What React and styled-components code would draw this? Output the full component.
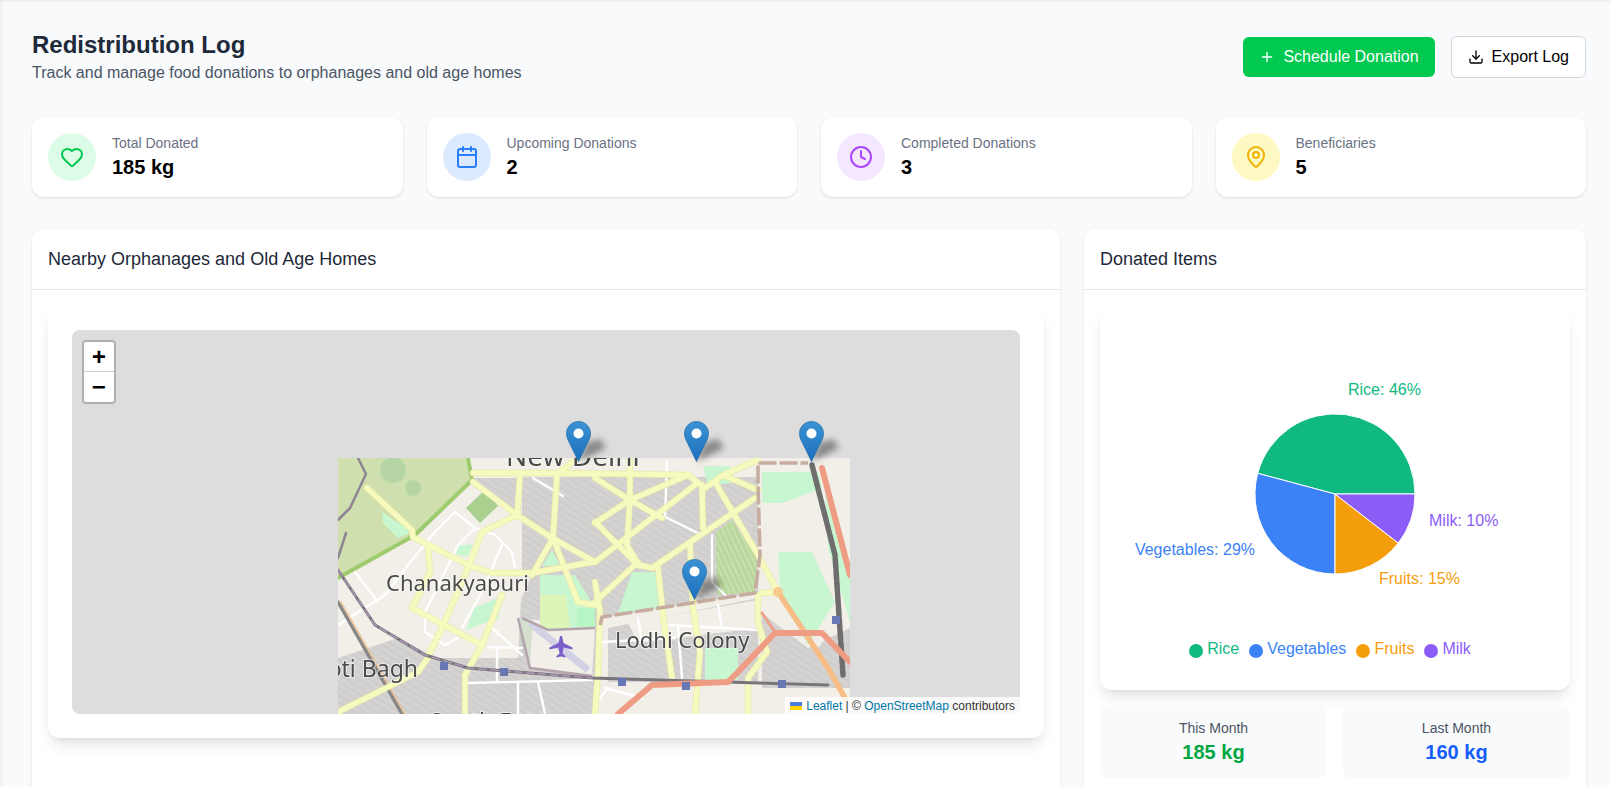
import React from 'react';
import styled, { createGlobalStyle } from 'styled-components';
import { Plus, Download, Heart, Calendar, Clock, MapPin } from 'lucide-react';

const GlobalStyle = createGlobalStyle`
  html,
  body {
    margin: 0;
    height: 100%;
    overflow: hidden;
    background: #f9fafb;
    font-family: 'Liberation Sans', Arial, sans-serif;
  }
  * {
    box-sizing: border-box;
  }
`;

const Page = styled.div`
  height: 787px;
  overflow: hidden;
  padding: 29px 24px 0 32px;
  background: #f9fafb;
  box-shadow: inset 0 3px 3px -2px rgba(0, 0, 0, 0.08), inset 3px 0 3px -2px rgba(0, 0, 0, 0.06);
`;

const Header = styled.header`
  display: flex;
  justify-content: space-between;
  align-items: center;
  margin-bottom: 32px;
`;

const Title = styled.h1`
  margin: 0;
  font-size: 24px;
  line-height: 32px;
  font-weight: 700;
  color: #1e2939;
`;

const Subtitle = styled.p`
  margin: 0;
  font-size: 16px;
  line-height: 24px;
  color: #4a5565;
`;

const Actions = styled.div`
  display: flex;
  align-items: center;
  gap: 16px;
`;

const Button = styled.button`
  display: flex;
  align-items: center;
  gap: 8px;
  height: ${(p) => (p.$primary ? '40px' : '42px')};
  padding: 0 16px;
  border: ${(p) => (p.$primary ? 'none' : '1px solid #d1d5dc')};
  border-radius: 6px;
  background: ${(p) => (p.$primary ? '#00c951' : '#fff')};
  color: ${(p) => (p.$primary ? '#fff' : '#000')};
  font-family: inherit;
  font-size: 16px;
`;

const StatGrid = styled.section`
  display: grid;
  grid-template-columns: repeat(4, 1fr);
  gap: 24px;
  margin-bottom: 32px;
`;

const StatCard = styled.div`
  display: flex;
  align-items: center;
  gap: 16px;
  padding: 16px;
  background: #fff;
  border-radius: 12px;
  box-shadow: 0 1px 3px rgba(0, 0, 0, 0.1), 0 1px 2px -1px rgba(0, 0, 0, 0.1);
`;

const IconCircle = styled.div`
  display: flex;
  align-items: center;
  justify-content: center;
  width: 48px;
  height: 48px;
  border-radius: 50%;
  background: ${(p) => p.$bg};
  color: ${(p) => p.$color};
`;

const StatLabel = styled.div`
  font-size: 14px;
  line-height: 20px;
  color: #6a7282;
`;

const StatValue = styled.div`
  font-size: 20px;
  line-height: 28px;
  font-weight: 700;
  color: #000;
`;

const MainGrid = styled.section`
  display: grid;
  grid-template-columns: repeat(3, 1fr);
  gap: 24px;
`;

const Card = styled.div`
  grid-column: span ${(p) => p.$span || 1};
  background: #fff;
  border-radius: 12px 12px 0 0;
  box-shadow: 0 1px 3px rgba(0, 0, 0, 0.1), 0 1px 2px -1px rgba(0, 0, 0, 0.1);
`;

const CardHeader = styled.div`
  height: 61px;
  padding: 16px;
  border-bottom: 1px solid #e5e7eb;
  font-size: 18px;
  line-height: 28px;
  color: #1e2939;
`;

const CardBody = styled.div`
  padding: 16px;
`;

const Panel = styled.div`
  height: ${(p) => (p.$map ? '432px' : '384px')};
  padding: 24px;
  margin-bottom: ${(p) => (p.$map ? '96px' : '16px')};
  background: #fff;
  border-radius: 12px;
  box-shadow: 0 10px 15px -3px rgba(0, 0, 0, 0.1), 0 4px 6px -4px rgba(0, 0, 0, 0.1);
`;

const MapBox = styled.div`
  position: relative;
  height: 384px;
  overflow: hidden;
  border-radius: 8px;
  background: #ddd;
`;

const Tile = styled.svg`
  position: absolute;
  left: 266px;
  top: 128px;
  width: 512px;
  height: 256px;
`;

const Zoom = styled.div`
  position: absolute;
  left: 10px;
  top: 10px;
  width: 34px;
  overflow: hidden;
  border: 2px solid rgba(0, 0, 0, 0.2);
  border-radius: 4px;
  background-clip: padding-box;
`;

const ZoomButton = styled.div`
  display: flex;
  align-items: center;
  justify-content: center;
  height: 30px;
  padding-top: 3px;
  background: #fff;
  color: #000;
  font-family: 'Liberation Mono', monospace;
  font-size: 24px;
  font-weight: 700;
  border-bottom: ${(p) => (p.$first ? '1px solid #ccc' : 'none')};
`;

const PinWrap = styled.svg`
  position: absolute;
  left: ${(p) => p.$x - 12.5}px;
  top: ${(p) => p.$y - 41}px;
  width: 41px;
  height: 41px;
  overflow: visible;
`;

const Attribution = styled.div`
  position: absolute;
  right: 0;
  bottom: 0;
  display: flex;
  align-items: center;
  height: 17px;
  padding: 0 5px;
  background: rgba(255, 255, 255, 0.8);
  color: #333;
  font-size: 12px;
  white-space: pre;
`;

const AttrLink = styled.span`
  color: #0078a8;
`;

const Flag = styled.svg`
  width: 12px;
  height: 8px;
  margin-right: 4px;
`;

const ChartSvg = styled.svg`
  display: block;
  width: 422px;
  height: 300px;
`;

const Legend = styled.ul`
  display: flex;
  justify-content: center;
  margin: 7px 0 0;
  padding: 0;
  list-style: none;
`;

const LegendItem = styled.li`
  display: flex;
  align-items: center;
  gap: 4px;
  margin-right: 10px;
  font-size: 16px;
  line-height: 24px;
  color: ${(p) => p.$color};
`;

const Dot = styled.span`
  width: 14px;
  height: 14px;
  margin-top: 3px;
  border-radius: 50%;
  background: ${(p) => p.$color};
`;

const MonthGrid = styled.div`
  display: grid;
  grid-template-columns: 1fr 1fr;
  gap: 16px;
`;

const MonthBox = styled.div`
  padding: 12px;
  border-radius: 8px;
  background: #f9fafb;
  text-align: center;
`;

const MonthLabel = styled.div`
  font-size: 14px;
  line-height: 20px;
  color: #4a5565;
`;

const MonthValue = styled.div`
  font-size: 20px;
  line-height: 28px;
  font-weight: 700;
  color: ${(p) => p.$color};
`;

const stats = [
  { label: 'Total Donated', value: '185 kg', Icon: Heart, bg: '#dcfce7', color: '#00c951' },
  { label: 'Upcoming Donations', value: '2', Icon: Calendar, bg: '#dbeafe', color: '#2b7fff' },
  { label: 'Completed Donations', value: '3', Icon: Clock, bg: '#f3e8ff', color: '#ad46ff' },
  { label: 'Beneficiaries', value: '5', Icon: MapPin, bg: '#fef9c2', color: '#f0b100' },
];

const slices = [
  { name: 'Rice', color: '#10b981', d: 'M211 164L291 164A80 80 0 0 0 133.7 143.3Z' },
  { name: 'Vegetables', color: '#3b82f6', d: 'M211 164L133.7 143.3A80 80 0 0 0 211 244Z' },
  { name: 'Fruits', color: '#f59e0b', d: 'M211 164L211 244A80 80 0 0 0 274.3 213Z' },
  { name: 'Milk', color: '#8b5cf6', d: 'M211 164L274.3 213A80 80 0 0 0 291 164Z' },
];

const sliceLabels = [
  { text: 'Rice: 46%', x: 224, y: 65, anchor: 'start', color: '#10b981' },
  { text: 'Vegetables: 29%', x: 131, y: 225, anchor: 'end', color: '#3b82f6' },
  { text: 'Fruits: 15%', x: 255, y: 254, anchor: 'start', color: '#f59e0b' },
  { text: 'Milk: 10%', x: 305, y: 196, anchor: 'start', color: '#8b5cf6' },
];

const pins = [
  { x: 506.5, y: 132 },
  { x: 624.5, y: 132 },
  { x: 739, y: 132 },
  { x: 622.5, y: 269.5 },
];

// map tile, traced in tile coordinates (512x256)
const blocks = [
  '184,19 420,19 420,135 262,160 257,256 0,256 0,200 60,180 100,200 180,200 184,120',
  '424,47 440,47 440,92 424,92',
  '424,155 470,190 512,170 512,230 424,230',
  '270,170 420,140 420,224 270,224',
  '130,20 184,20 180,55 150,40',
];

const beige = [
  '135,24 179,57 144,74 130,108 190,117 194,117 170,170 130,200 80,190 40,150 0,130 0,120 77,77',
  '290,165 420,142 420,170 300,185',
  '424,14 512,14 512,150 480,190 424,150',
  '180,160 257,168 254,218 192,210',
];

const mint = [
  '424,14 480,14 484,30 445,45 424,45',
  '440,94 474,94 497,144 470,187 457,164 442,130',
  '487,27 512,117 512,164 490,90',
  '294,114 320,114 320,150 280,155',
  '367,190 400,190 400,222 367,222',
  '202,117 237,117 254,145 257,170 210,172 202,150',
  '44,54 74,74 60,80 45,65',
  '204,108 214,92 222,108',
  '136,150 164,138 160,160 128,172',
  '120,88 135,86 130,98 118,97',
  '365,8 392,8 395,25 370,28',
];

const yellow = [
  '29,30 74,72 75,79 130,107 154,115 194,115 255,104',
  '135,15 184,15 220,15 350,17',
  '135,24 179,57 214,80 257,104',
  '182,19 179,57',
  '219,17 215,80',
  '179,57 144,74 130,110 104,170 89,200',
  '215,80 194,117',
  '215,80 240,144 257,147',
  '90,90 92,114 74,150 144,187',
  '164,137 144,187 127,217 127,256',
  '0,254 80,214 90,200',
  '257,65 292,42 350,17',
  '292,0 292,42 289,87 299,104',
  '257,20 292,42 324,60',
  '257,104 357,27',
  '257,64 300,107',
  '300,107 314,110 417,40',
  '364,27 365,70',
  '377,24 420,97 440,134',
  '257,144 300,104',
  '320,110 325,157 334,220',
  '352,87 355,150 362,194 357,256',
  '420,137 420,164 429,194 410,220 410,256',
  '257,124 262,154 260,214 257,256',
  '440,134 424,135',
  '350,17 367,30 385,17 415,30 420,32',
  '385,17 420,2',
  '240,0 220,15',
];

const white = [
  '117,54 137,70 157,77 174,94 177,110',
  '117,54 97,74 70,107 47,137 0,167',
  '137,70 120,87 104,120 87,154 87,174 107,187 120,180',
  '164,87 144,134 124,170',
  '17,114 40,144',
  '154,170 184,197',
  '150,189 184,190',
  '159,190 159,224',
  '130,225 254,222',
  '180,224 180,256',
  '200,224 207,256',
  '329,4 327,59 360,75',
  '374,77 374,124 387,137',
  '380,147 384,170',
  '300,160 304,184',
  '330,167 420,172',
  '264,184 337,180',
  '340,167 344,220',
  '270,230 257,247',
  '267,230 304,240',
  '195,20 225,38',
];

const stations = [
  [106, 208],
  [166, 214],
  [284, 224],
  [348, 228],
  [444, 226],
  [498, 162],
];

const MapTile = () => (
  <Tile viewBox="0 0 512 256">
    <defs>
      <pattern id="houses" width="6" height="6" patternUnits="userSpaceOnUse" patternTransform="rotate(32)">
        <rect width="6" height="6" fill="#d5d3d1" />
        <path d="M0 3H6" stroke="#c9c7c5" strokeWidth="1" />
      </pattern>
      <pattern id="stripes" width="5" height="5" patternUnits="userSpaceOnUse" patternTransform="rotate(65)">
        <rect width="5" height="5" fill="#b9d79c" />
        <path d="M0 2H5" stroke="#d3e6b8" strokeWidth="1.2" />
      </pattern>
    </defs>
    <g style={{ filter: 'blur(0.7px)' }}>
      <rect width="512" height="256" fill="#f2efe9" />
      {blocks.map((p) => (
        <polygon key={p} points={p} fill="url(#houses)" />
      ))}
      {beige.map((p) => (
        <polygon key={p} points={p} fill="#f2efe9" />
      ))}
      <polygon points="0,0 130,0 134,22 77,77 0,120" fill="#cfe0ae" />
      <polygon points="128,50 147,32 160,48 142,65" fill="#a9d08e" />
      <circle cx="55" cy="12" r="13" fill="#b5d6a4" />
      <circle cx="75" cy="30" r="8" fill="#b5d6a4" />
      <polygon points="378,74 394,62 419,100 417,134 379,137" fill="url(#stripes)" />
      {mint.map((p) => (
        <polygon key={p} points={p} fill="#c8f6d0" />
      ))}
      <polygon points="202,137 228,137 232,170 202,170" fill="#def5b8" />
      <polygon points="239,150 257,150 257,170 239,168" fill="#b8f5c5" />
      <polygon points="180,160 195,162 192,206 184,190" fill="#9fc59a" opacity="0.35" />
      <path d="M192 165L250 212" stroke="#d2d0e4" strokeWidth="7" fill="none" />
      <path d="M184 160L210 172L257 170M180 160L192 210L254 218" stroke="#b3a4ae" strokeWidth="2.5" fill="none" />
      <g fill="none" strokeLinejoin="round" strokeLinecap="round">
        <path d="M134 22L130 0M134 22L77 77L0 120" stroke="#9ecb6e" strokeWidth="4" />
        <path d="M20 0L28 16L12 50L0 62M0 100L8 75" stroke="#8f8494" strokeWidth="2.5" />
        {white.map((p) => (
          <polyline key={p} points={p} stroke="#fff" strokeWidth="2.4" />
        ))}
        <polyline points="0,144 64,256" stroke="#888" strokeWidth="3.5" />
        <polyline points="3,144 67,256" stroke="#efc08a" strokeWidth="1.5" />
        {yellow.map((p) => (
          <polyline key={p} points={p} stroke="#e9eba8" strokeWidth="6.4" />
        ))}
        {yellow.map((p) => (
          <polyline key={p} points={p} stroke="#f7fabf" strokeWidth="5" />
        ))}
        <polyline
          points="262,167 264,159 417,135 422,97 420,27 420,5 470,5"
          stroke="#c6ad9f"
          strokeWidth="3.6"
          strokeDasharray="18 3"
          strokeLinecap="butt"
        />
        <polyline points="0,112 37,167 87,197 130,210 254,220 490,227" stroke="#77747a" strokeWidth="3" />
        <polyline
          points="0,112 37,167 87,197 130,210 254,220"
          stroke="#ac94b4"
          strokeWidth="1.6"
          strokeDasharray="8 4"
        />
        <polyline points="474,7 497,97 505,217" stroke="#6e6e6e" strokeWidth="5.5" strokeDasharray="10 2" />
        <polyline points="440,134 490,210 507,240" stroke="#f7bd85" strokeWidth="5.5" />
        <polyline points="424,155 437,174" stroke="#ef9f85" strokeWidth="3" />
        <polyline
          points="280,256 314,227 390,224 400,214 437,175 484,175 512,204"
          stroke="#ef9c85"
          strokeWidth="6"
        />
        <polyline points="484,10 512,117" stroke="#ef9c85" strokeWidth="6" />
      </g>
      {stations.map(([x, y]) => (
        <rect key={x} x={x - 4} y={y - 4} width="8" height="8" fill="#6878b4" />
      ))}
      <circle cx="440" cy="134" r="5" fill="#f7c98f" />
      <path
        d="M222 178l2 0 1.500 7 9 4.500 0 2-9-2-1 6 3 2.500 0 1.500-4.500-1-4.500 1 0-1.500 3-2.500-1-6-9 2 0-2 9-4.500z"
        fill="#7b5ec9"
      />
      <g
        fontFamily="'Noto Sans', sans-serif"
        fill="#4a4a4a"
        stroke="#fff"
        strokeOpacity="0.55"
        strokeWidth="2"
        paintOrder="stroke"
      >
        <text x="168" y="8" fontSize="28">
          New Delhi
        </text>
        <text x="48" y="133" fontSize="22">
          Chanakyapuri
        </text>
        <text x="277" y="190" fontSize="22">
          Lodhi Colony
        </text>
        <text x="80" y="219" fontSize="23" textAnchor="end">
          Moti Bagh
        </text>
        <text x="92" y="272" fontSize="23">
          South Ext
        </text>
      </g>
    </g>
  </Tile>
);

const Pin = ({ x, y, id }) => (
  <PinWrap $x={x} $y={y} viewBox="0 0 41 41">
    <defs>
      <linearGradient id={id} x1="0" y1="0" x2="0" y2="1">
        <stop offset="0" stopColor="#3a93d3" />
        <stop offset="1" stopColor="#1d6fbd" />
      </linearGradient>
    </defs>
    <path d="M12.5 41L20 22L34 18L40 27Z" fill="rgba(0,0,0,0.38)" style={{ filter: 'blur(3px)' }} />
    <path
      d="M12.500 0.500C5.900 0.500 0.500 5.900 0.500 12.500C0.500 15.500 1.500 18.200 3 21L12.500 40.500L22 21C23.500 18.200 24.500 15.500 24.500 12.500C24.500 5.900 19.100 0.500 12.500 0.500Z"
      fill={`url(#${id})`}
      stroke="#2a73ad"
      strokeWidth="0.8"
    />
    <circle cx="12.500" cy="12.500" r="5" fill="#fff" />
  </PinWrap>
);

const App = () => (
  <Page>
    <GlobalStyle />
    <Header>
      <div>
        <Title>Redistribution Log</Title>
        <Subtitle>Track and manage food donations to orphanages and old age homes</Subtitle>
      </div>
      <Actions>
        <Button $primary>
          <Plus size={16} />
          Schedule Donation
        </Button>
        <Button>
          <Download size={16} />
          Export Log
        </Button>
      </Actions>
    </Header>

    <StatGrid>
      {stats.map(({ label, value, Icon, bg, color }) => (
        <StatCard key={label}>
          <IconCircle $bg={bg} $color={color}>
            <Icon size={24} />
          </IconCircle>
          <div>
            <StatLabel>{label}</StatLabel>
            <StatValue>{value}</StatValue>
          </div>
        </StatCard>
      ))}
    </StatGrid>

    <MainGrid>
      <Card $span={2}>
        <CardHeader>Nearby Orphanages and Old Age Homes</CardHeader>
        <CardBody>
          <Panel $map>
            <MapBox>
              <MapTile />
              {pins.map((pin, i) => (
                <Pin key={i} x={pin.x} y={pin.y} id={`pin-${i}`} />
              ))}
              <Zoom>
                <ZoomButton $first>+</ZoomButton>
                <ZoomButton>−</ZoomButton>
              </Zoom>
              <Attribution>
                <Flag viewBox="0 0 12 8">
                  <rect width="12" height="4" fill="#4c7be1" />
                  <rect y="4" width="12" height="4" fill="#ffd500" />
                </Flag>
                <AttrLink>Leaflet</AttrLink> | © <AttrLink>OpenStreetMap</AttrLink> contributors
              </Attribution>
            </MapBox>
          </Panel>
        </CardBody>
      </Card>

      <Card>
        <CardHeader>Donated Items</CardHeader>
        <CardBody>
          <Panel>
            <ChartSvg viewBox="0 0 422 300">
              {slices.map((s) => (
                <path key={s.name} d={s.d} fill={s.color} stroke="#fff" strokeWidth="1" />
              ))}
              {sliceLabels.map((l) => (
                <text key={l.text} x={l.x} y={l.y} textAnchor={l.anchor} fill={l.color} fontSize="16">
                  {l.text}
                </text>
              ))}
            </ChartSvg>
            <Legend>
              {slices.map((s) => (
                <LegendItem key={s.name} $color={s.color}>
                  <Dot $color={s.color} />
                  {s.name}
                </LegendItem>
              ))}
            </Legend>
          </Panel>
          <MonthGrid>
            <MonthBox>
              <MonthLabel>This Month</MonthLabel>
              <MonthValue $color="#00a63e">185 kg</MonthValue>
            </MonthBox>
            <MonthBox>
              <MonthLabel>Last Month</MonthLabel>
              <MonthValue $color="#155dfc">160 kg</MonthValue>
            </MonthBox>
          </MonthGrid>
        </CardBody>
      </Card>
    </MainGrid>
  </Page>
);

export default App;
